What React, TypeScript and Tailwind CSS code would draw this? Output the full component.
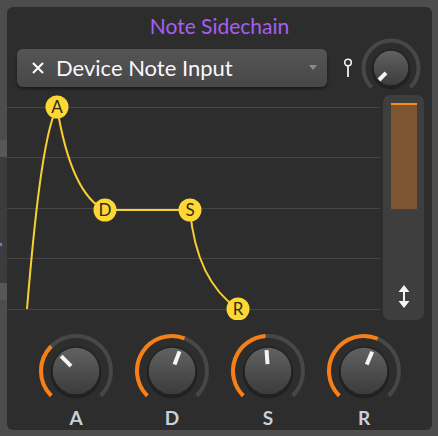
import { useId } from "react";

const FONT = { fontFamily: "Lato, 'Open Sans', sans-serif" };

function polar(cx: number, cy: number, r: number, deg: number) {
  const rad = (deg * Math.PI) / 180;
  return [cx + r * Math.sin(rad), cy - r * Math.cos(rad)];
}

function arc(cx: number, cy: number, r: number, a1: number, a2: number) {
  const [x1, y1] = polar(cx, cy, r, a1);
  const [x2, y2] = polar(cx, cy, r, a2);
  const large = a2 - a1 > 180 ? 1 : 0;
  return `M${x1} ${y1} A${r} ${r} 0 ${large} 1 ${x2} ${y2}`;
}

type KnobProps = {
  angle: number;
  size: number;
  height: number;
  cy: number;
  ringR: number;
  bodyR: number;
  tick: [number, number];
  fill?: boolean;
};

function Knob({ angle, size, height, cy, ringR, bodyR, tick, fill = true }: KnobProps) {
  const id = useId().replace(/:/g, "");
  const cx = size / 2;
  const [tx1, ty1] = polar(cx, cy, tick[0], angle);
  const [tx2, ty2] = polar(cx, cy, tick[1], angle);
  return (
    <svg width={size} height={height} viewBox={`0 0 ${size} ${height}`}>
      <defs>
        <linearGradient id={`g${id}`} x1="0" y1="0" x2="0" y2="1">
          <stop offset="0" stopColor="#626262" />
          <stop offset="1" stopColor="#3b3b3b" />
        </linearGradient>
      </defs>
      <path d={arc(cx, cy, ringR, -135, 135)} stroke="#474747" strokeWidth="4" fill="none" />
      {fill && <path d={arc(cx, cy, ringR, -135, angle)} stroke="#f77f15" strokeWidth="4" fill="none" />}
      <circle cx={cx} cy={cy + 2} r={bodyR + 1.5} fill="#1c1c1c" opacity="0.7" />
      <circle cx={cx} cy={cy} r={bodyR} fill={`url(#g${id})`} stroke="#222" strokeWidth="1.5" />
      <line x1={tx1} y1={ty1} x2={tx2} y2={ty2} stroke="#f4f4f4" strokeWidth="4" />
    </svg>
  );
}

const POINTS = [
  { l: "A", x: 50, y: 12 },
  { l: "D", x: 98, y: 115 },
  { l: "S", x: 183, y: 115 },
  { l: "R", x: 231, y: 214 },
];

function Envelope() {
  return (
    <svg width="373" height="225" viewBox="0 0 373 225" className="shrink-0">
      {[12.5, 62.5, 113.5, 163.5, 214.5].map((y) => (
        <line key={y} x1="0" x2="376" y1={y} y2={y} stroke="#454545" strokeWidth="1" />
      ))}
      <path
        d="M20 214 C27 130 36 40 50 12 M50 12 C57 55 70 102 98 115 L183 115 C187 160 203 195 231 214"
        stroke="#f5d030"
        strokeWidth="2"
        fill="none"
      />
      {POINTS.map((p) => (
        <g key={p.l}>
          <circle cx={p.x} cy={p.y} r="11.5" fill="#fdd835" />
          <text
            x={p.x}
            y={p.y + 6}
            textAnchor="middle"
            fontSize="17"
            fill="#2e2a1c"
            style={FONT}
          >
            {p.l}
          </text>
        </g>
      ))}
    </svg>
  );
}

const KNOBS = [
  { l: "A", a: -45 },
  { l: "D", a: 21 },
  { l: "S", a: -4 },
  { l: "R", a: 23 },
];

export default function App() {
  return (
    <div className="w-[438px] h-[436px] bg-[#4d4d4d] flex overflow-hidden" style={FONT}>
      <div className="w-[7px] flex flex-col shrink-0">
        <div className="h-[140px]" />
        <div className="h-[17px] bg-[#575757]" />
        <div className="h-[126px] bg-[#3c3c3c] flex flex-col">
          <div className="h-[86px]" />
          <div className="h-[3px] w-[2px] bg-[#a35ee8]" />
        </div>
        <div className="h-[17px] bg-[#575757]" />
      </div>
      <div className="mt-[7px] w-[425px] h-[423px] bg-[#2d2d2d] rounded-[6px] flex flex-col shrink-0">
        <div className="pt-[7px] h-[31px] text-center text-[21px] leading-[24px] text-[#a95ef2]">
          Note Sidechain
        </div>
        <div className="mt-[11px] h-[38px] flex items-center pl-[10px]">
          <div className="w-[310px] h-[38px] rounded-[6px] bg-gradient-to-b from-[#555555] to-[#474747] shadow-[0_2px_3px_rgba(0,0,0,0.45)] flex items-center pl-[15px] pr-[8px]">
            <svg width="12" height="12" viewBox="0 0 12 12" className="shrink-0">
              <path d="M1 1 L11 11 M11 1 L1 11" stroke="#f4f6fb" strokeWidth="2.2" />
            </svg>
            <span className="ml-[12px] text-[22px] leading-[24px] text-[#f6f8ff]">Device Note Input</span>
            <svg width="10" height="6" viewBox="0 0 10 6" className="ml-auto mr-[1px]">
              <path d="M1 0 L9 0 L5 5 Z" fill="#8b8b8b" />
            </svg>
          </div>
          <svg width="10" height="20" viewBox="0 0 10 20" className="ml-[16px] shrink-0">
            <circle cx="5" cy="4.5" r="3.3" stroke="#f2f2f2" strokeWidth="1.6" fill="none" />
            <line x1="5" y1="8" x2="5" y2="19" stroke="#f2f2f2" strokeWidth="1.8" />
          </svg>
          <div className="ml-[8px]">
            <Knob angle={-135} size={60} height={60} cy={30} ringR={27.5} bodyR={18} tick={[7, 17]} fill={false} />
          </div>
        </div>
        <div className="mt-[8px] h-[225px] flex">
          <Envelope />
          <div className="ml-[3px] w-[41px] h-[225px] rounded-[7px] bg-[#3e3e3e] flex flex-col items-center pt-[8px]">
            <div className="w-[26px] h-[106px] bg-[#7c5631] border-t-2 border-[#ff8a1c]" />
            <svg width="12" height="23" viewBox="0 0 12 23" className="mt-[76px]">
              <path d="M6 0 L0.5 7 L11.5 7 Z M6 23 L0.5 16 L11.5 16 Z" fill="#f4f4f4" />
              <rect x="5" y="6" width="2" height="11" fill="#f4f4f4" />
            </svg>
          </div>
        </div>
        <div className="mt-[13px] pl-[21px] flex">
          {KNOBS.map((k) => (
            <div key={k.l} className="w-[96px] flex flex-col items-center">
              <Knob angle={k.a} size={80} height={74} cy={38} ringR={35} bodyR={24} tick={[7, 21]} />
              <div className="text-[19px] leading-[22px] font-bold text-[#c9d0da]">{k.l}</div>
            </div>
          ))}
        </div>
      </div>
    </div>
  );
}
